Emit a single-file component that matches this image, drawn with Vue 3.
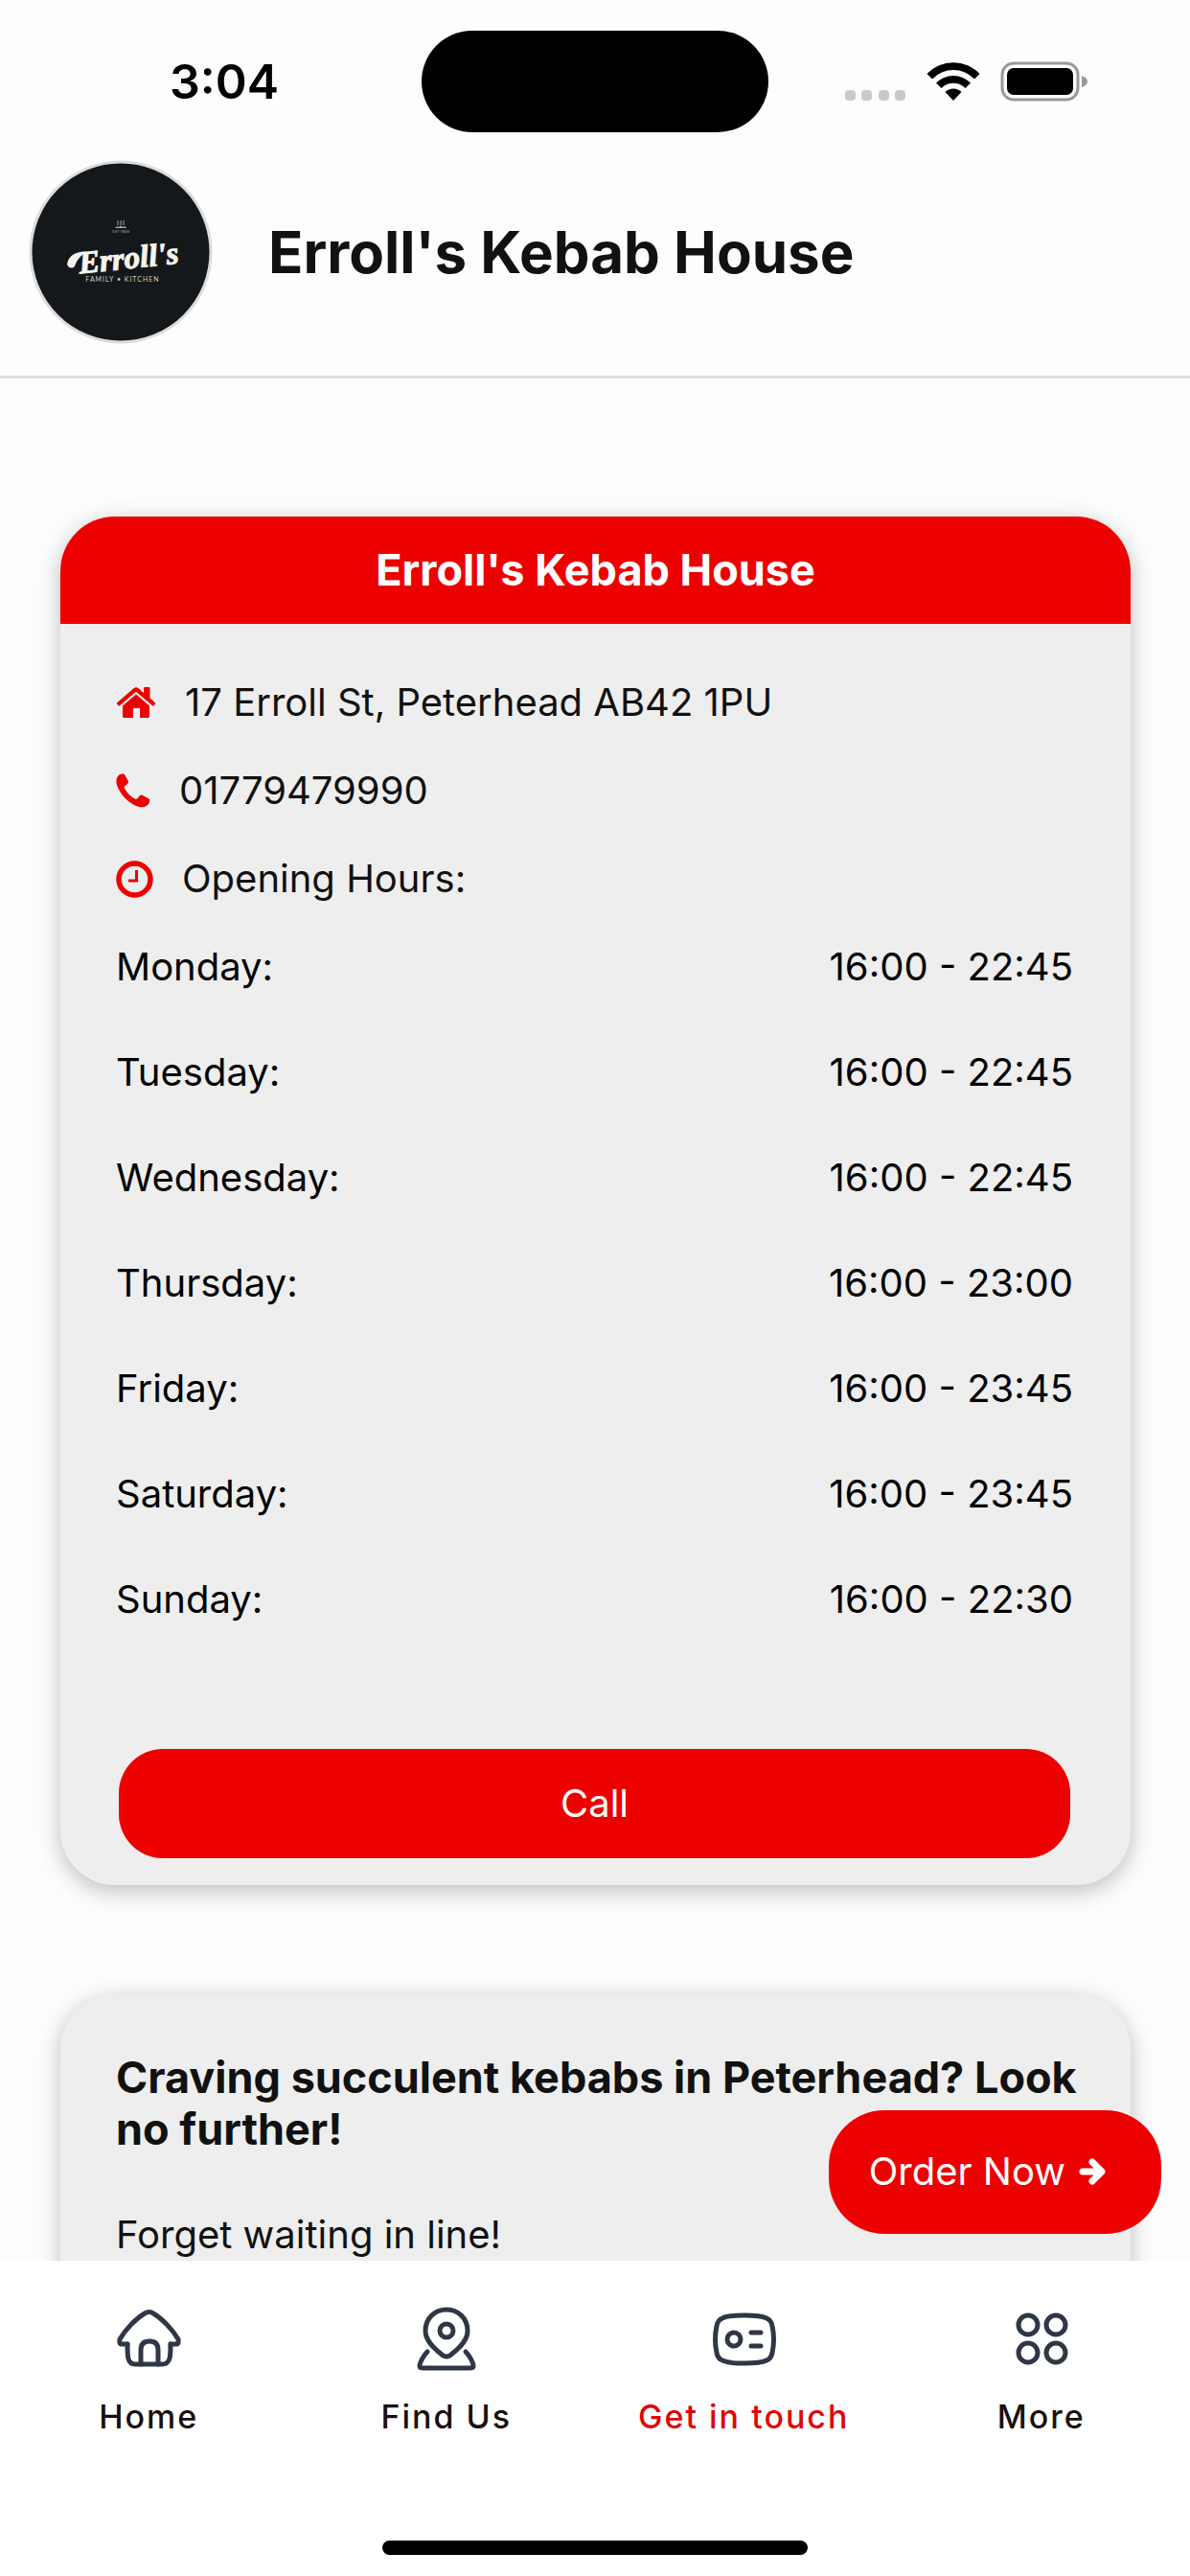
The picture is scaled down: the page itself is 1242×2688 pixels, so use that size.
<script setup>
import { ref } from 'vue'

const shop = {
  name: "Erroll's Kebab House",
  address: '17 Erroll St, Peterhead AB42 1PU',
  phone: '01779479990'
}

const hours = [
  { day: 'Monday', time: '16:00 - 22:45' },
  { day: 'Tuesday', time: '16:00 - 22:45' },
  { day: 'Wednesday', time: '16:00 - 22:45' },
  { day: 'Thursday', time: '16:00 - 23:00' },
  { day: 'Friday', time: '16:00 - 23:45' },
  { day: 'Saturday', time: '16:00 - 23:45' },
  { day: 'Sunday', time: '16:00 - 22:30' }
]

const tabs = [
  { id: 'home', label: 'Home' },
  { id: 'find', label: 'Find Us' },
  { id: 'contact', label: 'Get in touch' },
  { id: 'more', label: 'More' }
]

const activeTab = ref('contact')

const call = () => {
  window.location.href = `tel:${shop.phone}`
}
</script>

<template>
  <div class="app">
    <div class="status-bar">
      <div class="status-time">3:04</div>
      <div class="island"></div>
      <div class="status-icons">
        <svg width="64" height="42" viewBox="0 0 64 42" fill="#c9c9c9">
          <rect x="0" y="30" width="11" height="11" rx="4" />
          <rect x="17" y="30" width="11" height="11" rx="4" />
          <rect x="35" y="30" width="11" height="11" rx="4" />
          <rect x="52" y="30" width="11" height="11" rx="4" />
        </svg>
        <svg width="56" height="42" viewBox="0 0 56 42">
          <path d="M0.500 13A38 38 0 0 1 55.500 13L50 18.500A30.500 30.500 0 0 0 6 18.500Z" />
          <path d="M10 22.500A25.500 25.500 0 0 1 46 22.500L40.500 28A17.500 17.500 0 0 0 15.500 28Z" />
          <path d="M19.500 32A12 12 0 0 1 36.500 32L28 41Z" />
        </svg>
        <svg width="91" height="42" viewBox="0 0 91 42">
          <rect x="2" y="2" width="79" height="38" rx="12" fill="none" stroke="#999" stroke-width="3" />
          <rect x="7" y="7" width="69" height="28" rx="7" />
          <path d="M85 15Q91 17 91 21Q91 25 85 27Z" fill="#999" />
        </svg>
      </div>
    </div>

    <header class="header">
      <svg class="logo" viewBox="0 0 192 192" role="img" aria-label="Erroll's Family Kitchen">
        <circle cx="96" cy="96" r="94" fill="#14181b" stroke="#dcdcde" stroke-width="3" />
        <g fill="#a9a9a6">
          <path d="M93 63v5M96 63v5M99 63v5" stroke="#a9a9a6" stroke-width="1" />
          <path d="M90 71q2-3 4-1q2-3 4 0q3-2 4 1z" />
          <text x="96" y="76" font-size="4" text-anchor="middle">EST 1989</text>
        </g>
        <g transform="rotate(-6 96 105)" fill="#f5f3ec">
          <path d="M40 103C42 94 51 90 62 92C55 95 51 99 48 105C46 109 40 107 40 103Z" />
          <text class="logo-name" x="52" y="114">Erroll's</text>
        </g>
        <text class="logo-sub" x="98" y="127" text-anchor="middle">FAMILY • KITCHEN</text>
      </svg>
      <h1>{{ shop.name }}</h1>
    </header>

    <div class="content">
      <main class="scroller">
        <section class="card">
          <h2 class="card-title">{{ shop.name }}</h2>
          <div class="card-body">
            <ul class="contact-list">
              <li>
                <svg width="42" height="34" viewBox="0 0 42 34" fill="#ed0000">
                  <path d="M21 8.500L35 20.500V31.500Q35 33 33.500 33H25V23H18V33H8.500Q7 33 7 31.500V20.500Z" />
                  <path d="M1.200 17.200L18.800 2.100Q21 0.500 23.200 2.100L29 7V2Q29 1 30 1H34.500Q35.500 1 35.500 2V12.500L40.900 17.200Q41.500 18 40.900 18.700L39.600 20.200Q38.800 20.800 38 20.200L21 5.700L4 20.200Q3.200 20.800 2.500 20.200L1.200 18.700Q0.500 18 1.200 17.200Z" />
                </svg>
                <span>{{ shop.address }}</span>
              </li>
              <li>
                <svg width="36" height="36" viewBox="0 0 36 36" fill="#ed0000">
                  <path d="M6.500 0.500C8 0.200 8.700 0.500 9.300 1.700L12.600 7.600C13.700 9.700 12.500 10.700 10.800 12C9 13.300 8.200 14 9.200 15.900C11.700 20.400 15.200 23.900 19.700 26.400C21.600 27.400 22.300 26.600 23.600 24.800C24.900 23.100 25.900 21.900 28 23L33.900 26.300C35.100 26.900 35.400 27.600 35.100 29.100C34.500 32.500 32.500 34.700 27.500 35.300C24 35.600 19.800 33.500 16.500 31.500C10.500 27.600 7 23.600 4 18.500C1.500 14.200 0 10.500 0.500 7C1.200 3.200 2.800 1.200 6.500 0.500Z" />
                </svg>
                <a href="tel:01779479990">{{ shop.phone }}</a>
              </li>
              <li>
                <svg width="39" height="39" viewBox="0 0 39 39" fill="none" stroke="#ed0000">
                  <circle cx="19.500" cy="19.500" r="16.500" stroke-width="5.500" />
                  <path d="M21.500 10V21H13" stroke-width="3" />
                </svg>
                <span>Opening Hours:</span>
              </li>
            </ul>

            <table class="hours">
              <tbody>
                <tr v-for="row in hours" :key="row.day">
                  <th scope="row">{{ row.day }}:</th>
                  <td>{{ row.time }}</td>
                </tr>
              </tbody>
            </table>

            <button class="call-btn" type="button" @click="call">Call</button>
          </div>
        </section>

        <section class="card promo">
          <h3>Craving succulent kebabs in Peterhead? Look no further!</h3>
          <p>Forget waiting in line!</p>
        </section>
      </main>

      <button class="order-btn" type="button">
        <span>Order Now</span>
        <svg width="28" height="30" viewBox="0 0 28 30" fill="none" stroke="#fff" stroke-width="7" stroke-linecap="round" stroke-linejoin="round">
          <path d="M4 15H23M14 5L24 15L14 25" />
        </svg>
      </button>
    </div>

    <footer class="bottom">
      <nav class="tabs">
        <a
          v-for="tab in tabs"
          :key="tab.id"
          href="#"
          class="tab"
          :class="{ active: tab.id === activeTab }"
          @click.prevent="activeTab = tab.id"
        >
          <svg class="tab-icon" viewBox="0 0 72 72">
            <template v-if="tab.id === 'home'">
              <path d="M14 41H8Q5 41 6 36C11 27 22 15 32 9Q37 6 41 9C51 15 62 27 67 36Q68 41 65 41H59" />
              <path d="M14 41C14 54 14 62 22 62H50C59 62 59 54 59 41" />
              <path d="M28 62V47Q28 38 37 38Q46 38 46 47V62" />
            </template>
            <template v-else-if="tab.id === 'find'">
              <path d="M36 54Q33 54 30 51C20 43 14 36 14 27C14 14 24 5 36 5S58 14 58 27C58 36 52 43 42 51Q39 54 36 54Z" />
              <circle cx="36" cy="27" r="7" />
              <path d="M16 49C11 54 8 61 8 64Q8 66 12 66H60Q64 66 64 64C64 61 61 54 56 49" />
            </template>
            <template v-else-if="tab.id === 'contact'">
              <path d="M37 11Q54 11 60 14Q65 16 66 22Q69 36 66 50Q65 56 60 58Q54 61 37 61Q20 61 14 58Q9 56 8 50Q5 36 8 22Q9 16 14 14Q20 11 37 11Z" />
              <circle cx="26" cy="36" r="7" />
              <path d="M44 29H54M44 43H54" />
            </template>
            <template v-else>
              <circle cx="22" cy="21" r="10" />
              <circle cx="51" cy="21" r="10" />
              <circle cx="22" cy="50" r="10" />
              <circle cx="51" cy="50" r="10" />
            </template>
          </svg>
          <span>{{ tab.label }}</span>
        </a>
      </nav>
      <div class="home-indicator"></div>
    </footer>
  </div>
</template>

<style>
body {
  margin: 0;
  background: #fdfdfd;
}
</style>

<style scoped>
.app {
  display: flex;
  flex-direction: column;
  height: 100vh;
  background: #fdfdfd;
  color: #111;
  font-family: Inter, "Liberation Sans", sans-serif;
  font-size: 40px;
  line-height: 46px;
}

.app * {
  box-sizing: border-box;
}

.app svg {
  display: block;
  flex-shrink: 0;
}

.status-bar {
  display: grid;
  grid-template-columns: 1fr 362px 1fr;
  align-items: center;
  padding-top: 32px;
  color: #000;
}

.status-time {
  padding-left: 28px;
  text-align: center;
  font-size: 50px;
  font-weight: 600;
}

.island {
  height: 106px;
  border-radius: 53px;
  background: #000;
}

.status-icons {
  display: flex;
  justify-content: flex-end;
  gap: 21px;
  padding-right: 107px;
}

.header {
  display: flex;
  align-items: center;
  gap: 58px;
  padding: 29px 30px 33px;
  border-bottom: 3px solid #dedede;
}

.logo {
  width: 192px;
  height: 192px;
}

.logo-name {
  font-family: "Liberation Serif", serif;
  font-size: 33px;
  font-style: italic;
  font-weight: 700;
  stroke: #f5f3ec;
  stroke-width: 1px;
}

.logo-sub {
  fill: #d0d0cd;
  font-family: Lato, sans-serif;
  font-size: 7px;
  letter-spacing: 1px;
}

h1 {
  margin: 0;
  font-size: 60px;
  font-weight: 700;
  line-height: 72px;
}

.content {
  position: relative;
  flex: 1;
  min-height: 0;
}

.scroller {
  display: flex;
  flex-direction: column;
  gap: 114px;
  height: 100%;
  padding: 144px 62px 0 63px;
  overflow: hidden;
}

.card {
  flex-shrink: 0;
  border-radius: 57px;
  background: #eee;
  box-shadow: 0 6px 24px rgba(0, 0, 0, 0.26);
}

.card-title {
  margin: 0;
  padding: 28px;
  border-radius: 57px 57px 0 0;
  background: #ed0000;
  color: #fff;
  font-size: 45px;
  font-weight: 700;
  line-height: 56px;
  text-align: center;
}

.card-body {
  padding: 59px 60px 28px 58px;
}

.contact-list {
  display: flex;
  flex-direction: column;
  gap: 46px;
  margin: 0;
  padding: 0;
  list-style: none;
}

.contact-list li {
  display: flex;
  align-items: center;
  gap: 30px;
}

.contact-list a {
  color: inherit;
  text-decoration: none;
}

.hours {
  width: 100%;
  margin-top: 14px;
  border-collapse: collapse;
  color: #000;
}

.hours th,
.hours td {
  padding: 32px 0;
  font-weight: 400;
  text-align: left;
}

.hours td {
  text-align: right;
}

.call-btn {
  display: block;
  width: calc(100% - 6px);
  margin: 101px auto 0;
  padding: 34px;
  border: none;
  border-radius: 46px;
  background: #ed0000;
  color: #fff;
  font: inherit;
  cursor: pointer;
}

.promo {
  padding: 60px 40px 60px 58px;
}

.promo h3 {
  margin: 0 0 60px;
  font-size: 45px;
  font-weight: 700;
  line-height: 54px;
}

.promo p {
  margin: 0;
}

.order-btn {
  position: absolute;
  right: 30px;
  bottom: 28px;
  display: flex;
  align-items: center;
  gap: 14px;
  padding: 41px 58px 42px 42px;
  border: none;
  border-radius: 58px;
  background: #ed0000;
  color: #fff;
  font: inherit;
  cursor: pointer;
}

.bottom {
  padding: 46px 0 22px;
  background: #fff;
}

.tabs {
  display: grid;
  grid-template-columns: repeat(4, 1fr);
}

.tab {
  display: flex;
  flex-direction: column;
  align-items: center;
  gap: 22px;
  color: #190e0e;
  font-size: 34px;
  font-weight: 500;
  letter-spacing: 2px;
  text-decoration: none;
}

.tab.active {
  color: #e00505;
}

.tab-icon {
  width: 72px;
  height: 72px;
  fill: none;
  stroke: #2f3746;
  stroke-width: 5px;
  stroke-linecap: round;
  stroke-linejoin: round;
}

.home-indicator {
  width: 444px;
  height: 15px;
  margin: 106px auto 0;
  border-radius: 8px;
  background: #000;
}
</style>
